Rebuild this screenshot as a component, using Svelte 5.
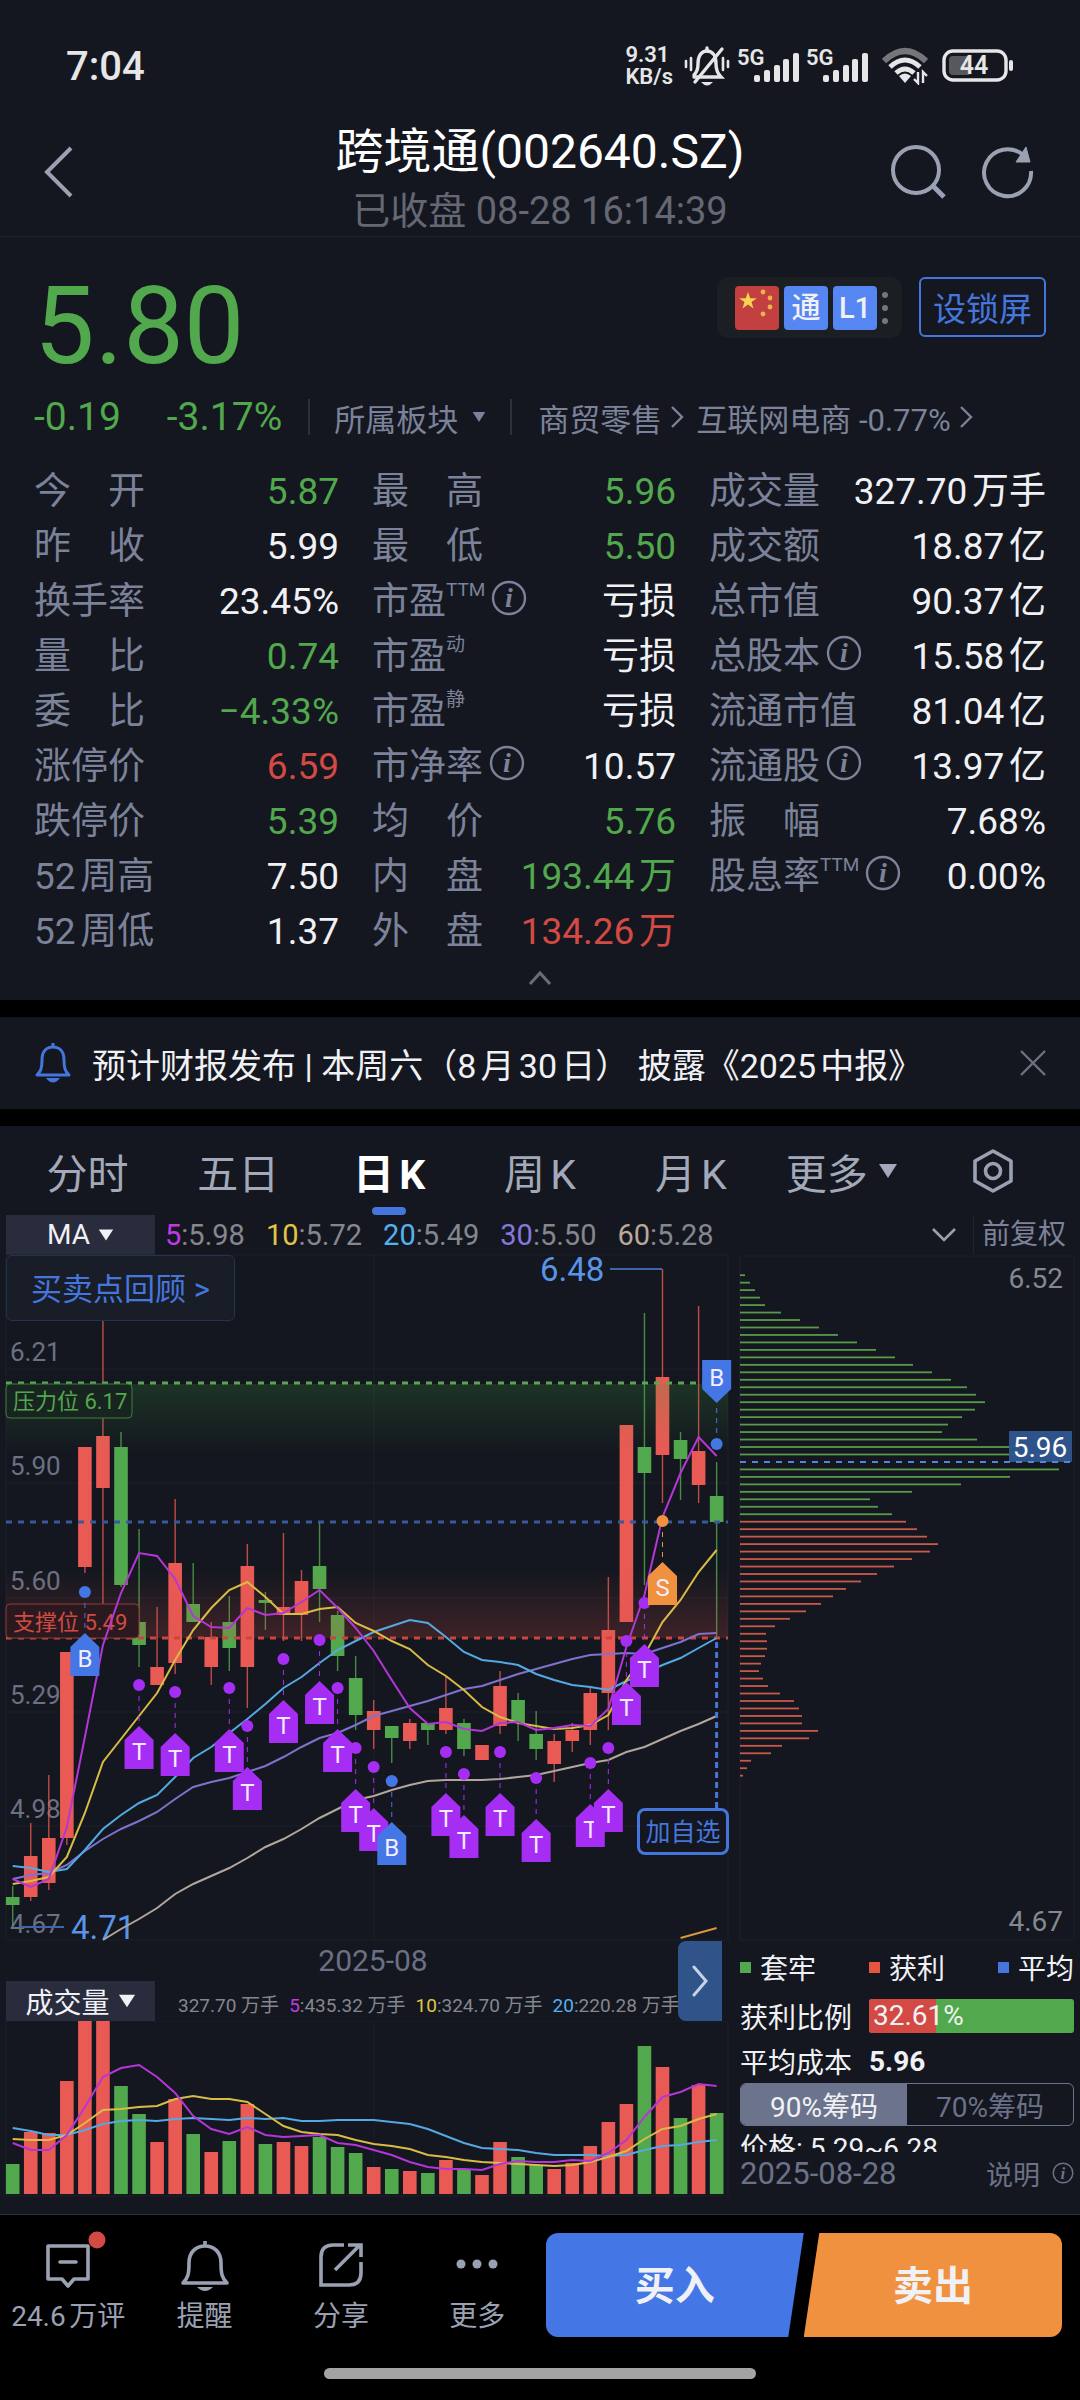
<script>
    const step = 18.05;
    const cx = (i) => 12.7 + i * step;

    const quotes = [
        [
            { label: '今　开', value: '5.87', tone: 'down' },
            { label: '昨　收', value: '5.99' },
            { label: '换手率', value: '23.45%' },
            { label: '量　比', value: '0.74', tone: 'down' },
            { label: '委　比', value: '−4.33%', tone: 'down' },
            { label: '涨停价', value: '6.59', tone: 'up' },
            { label: '跌停价', value: '5.39', tone: 'down' },
            { label: '52周高', value: '7.50' },
            { label: '52周低', value: '1.37' },
        ],
        [
            { label: '最　高', value: '5.96', tone: 'down' },
            { label: '最　低', value: '5.50', tone: 'down' },
            { label: '市盈', sup: 'TTM', info: true, value: '亏损' },
            { label: '市盈', sup: '动', value: '亏损' },
            { label: '市盈', sup: '静', value: '亏损' },
            { label: '市净率', info: true, value: '10.57' },
            { label: '均　价', value: '5.76', tone: 'down' },
            { label: '内　盘', value: '193.44万', tone: 'down' },
            { label: '外　盘', value: '134.26万', tone: 'up' },
        ],
        [
            { label: '成交量', value: '327.70万手' },
            { label: '成交额', value: '18.87亿' },
            { label: '总市值', value: '90.37亿' },
            { label: '总股本', info: true, value: '15.58亿' },
            { label: '流通市值', value: '81.04亿' },
            { label: '流通股', info: true, value: '13.97亿' },
            { label: '振　幅', value: '7.68%' },
            { label: '股息率', sup: 'TTM', info: true, value: '0.00%' },
        ],
    ];

    const tabs = ['分时', '五日', '日K', '周K', '月K'];
    let tab = '日K';

    const chipRanges = ['90%筹码', '70%筹码'];
    let chipRange = '90%筹码';

    const averages = [
        { period: '5', value: '5.98', cls: 'm5' },
        { period: '10', value: '5.72', cls: 'm10' },
        { period: '20', value: '5.49', cls: 'm20' },
        { period: '30', value: '5.50', cls: 'm30' },
        { period: '60', value: '5.28', cls: 'm60' },
    ];

    // [rising, high, body top, body bottom, low, volume]
    const candles = [
        [0, 632, 643, 651, 671, 30], [1, 569, 602, 643, 647, 62], [1, 521, 584, 629, 636, 61], [1, 398, 398, 584, 591, 113],
        [1, 193, 193, 313, 319, 173], [1, 60, 182, 234, 360, 173], [0, 178, 193, 331, 333, 108], [0, 275, 368, 391, 413, 80],
        [1, 353, 413, 431, 431, 52], [1, 245, 309, 409, 420, 95], [0, 309, 350, 368, 368, 60], [1, 368, 383, 413, 431, 42],
        [0, 342, 368, 394, 417, 53], [1, 290, 312, 413, 454, 90], [0, 338, 346, 349, 376, 50], [1, 279, 353, 361, 387, 52],
        [1, 316, 327, 361, 387, 48], [0, 268, 312, 335, 368, 57], [0, 357, 361, 402, 417, 47], [0, 402, 424, 461, 476, 41],
        [1, 446, 457, 476, 495, 27], [0, 472, 472, 484, 509, 25], [1, 465, 469, 487, 495, 23], [0, 469, 469, 476, 491, 21],
        [1, 423, 454, 476, 480, 34], [0, 465, 469, 495, 502, 25], [1, 491, 491, 506, 506, 19], [1, 417, 432, 472, 480, 52],
        [0, 439, 446, 469, 487, 37], [0, 457, 480, 495, 506, 29], [1, 480, 487, 510, 528, 25], [1, 469, 476, 487, 498, 31],
        [1, 432, 439, 476, 491, 48], [1, 323, 376, 439, 476, 72], [1, 171, 171, 368, 368, 90], [0, 59, 193, 219, 331, 148],
        [1, 15, 123, 201, 249, 127], [0, 178, 186, 205, 246, 76], [1, 52, 197, 231, 249, 109], [0, 208, 242, 268, 384, 81],
    ];

    const priceLines = [
        { cls: 'm60', from: 5, ys: [686, 675, 665, 654, 640, 630, 622, 614, 604, 593, 585, 575, 564, 555, 546, 542, 536, 531, 527, 526, 526, 526, 525, 523, 521, 517, 513, 509, 506, 498, 493, 485, 477, 470, 462] },
        { cls: 'm30', from: 0, ys: [625, 621, 619, 611, 597, 585, 575, 567, 558, 545, 533, 528, 524, 518, 512, 503, 493, 484, 479, 471, 462, 457, 452, 447, 441, 435, 432, 426, 420, 415, 410, 405, 401, 400, 399, 400, 394, 388, 380, 379] },
        { cls: 'm20', from: 0, ys: [612, 614, 618, 615, 596, 575, 561, 549, 541, 523, 504, 493, 479, 465, 450, 434, 423, 409, 396, 387, 378, 372, 366, 369, 383, 398, 406, 408, 411, 420, 426, 431, 433, 436, 427, 419, 411, 404, 394, 384] },
        { cls: 'm10', from: 0, ys: [630, 627, 623, 603, 559, 508, 485, 462, 439, 406, 376, 354, 336, 328, 343, 360, 360, 355, 353, 369, 377, 387, 395, 411, 422, 436, 453, 463, 469, 472, 475, 474, 471, 461, 426, 401, 368, 346, 318, 296] },
        { cls: 'm5', from: 0, ys: [625, 633, 625, 573, 483, 391, 339, 299, 302, 325, 362, 373, 374, 354, 361, 359, 348, 336, 354, 374, 397, 426, 454, 470, 468, 475, 477, 469, 468, 476, 474, 471, 472, 455, 393, 341, 263, 219, 183, 202] },
        { cls: 'm250', from: 37, ys: [684, 679, 674] },
    ];

    const volumeLines = [
        { cls: 'm20', from: 0, ys: [107, 110, 114, 114, 109, 103, 100, 99, 100, 98, 97, 98, 99, 97, 98, 97, 100, 100, 99, 99, 99, 101, 103, 108, 115, 122, 127, 128, 129, 132, 134, 134, 134, 135, 134, 129, 125, 124, 121, 119] },
        { cls: 'm10', from: 0, ys: [118, 119, 119, 114, 102, 89, 88, 86, 85, 78, 75, 78, 78, 81, 93, 105, 111, 113, 114, 119, 123, 125, 128, 134, 136, 139, 141, 142, 143, 144, 145, 144, 141, 136, 130, 118, 108, 105, 98, 93] },
        { cls: 'm5', from: 0, ys: [122, 129, 129, 114, 86, 56, 47, 44, 56, 72, 95, 108, 113, 106, 114, 116, 115, 114, 122, 124, 129, 134, 141, 146, 148, 148, 149, 143, 140, 141, 141, 139, 140, 132, 119, 96, 76, 71, 63, 65] },
    ];

    const points = (line) => line.ys.map((y, k) => `${cx(line.from + k)},${y}`).join(' ');

    // trade markers: candle index, dot height, letter
    const marks = [
        [4, 338, 'B'], [7, 431, 'T'], [9, 438, 'T'], [12, 434, 'T'], [13, 472, 'T'], [15, 405, 'T'], [17, 386, 'T'],
        [18, 434, 'T'], [19, 494, 'T'], [20, 513, 'T'], [21, 527, 'B'], [24, 498, 'T'], [25, 520, 'T'], [27, 498, 'T'],
        [29, 524, 'T'], [32, 509, 'T'], [33, 494, 'T'], [34, 387, 'T'], [35, 349, 'T'], [36, 267, 'S'],
    ];

    const priceAxis = [['6.21', 107], ['5.90', 221], ['5.60', 336], ['5.29', 450], ['4.98', 564], ['4.67', 679]];
    const gridRows = [115, 229, 344, 458, 572];

    const chips = [
        5, 10, 15, 20, 25, 41, 60, 79, 98, 117, 136, 155, 173, 192, 211, 227, 236, 245, 235, 222, 208, 202, 237, 272, 320, 0,
        319, 270, 221, 172, 130, 138, 152, 166, 177, 187, 198, 190, 172, 154, 137, 121, 106, 93, 81, 66, 50, 35, 26, 27, 27,
        25, 21, 19, 23, 28, 40, 54, 59, 62, 62, 78, 69, 42, 31, 11, 7, 3,
    ];

    const profitRatio = 32.61;
</script>

{#snippet info(size)}
    <svg class="info" viewBox="0 0 36 36" width={size} height={size}>
        <circle cx="18" cy="18" r="16" fill="none" stroke="currentColor" stroke-width="2.4" />
        <text x="18" y="27" text-anchor="middle">i</text>
    </svg>
{/snippet}

{#snippet caret(size)}
    <svg viewBox="0 0 20 16" width={size} height={size}><path fill="currentColor" d="M1 1h18L10 15z" /></svg>
{/snippet}

{#snippet arrow()}
    <svg viewBox="0 0 14 24" width="14" height="24"><path d="M2 2l10 10L2 22" fill="none" stroke="currentColor" stroke-width="2.4" /></svg>
{/snippet}

<div class="page">
    <div class="status">
        <span class="time">7:04</span>
        <div class="signals">
            <span class="speed"><span>9.31</span><span>KB/s</span></span>
            <svg viewBox="0 0 46 42" width="46" height="42">
                <g fill="none" stroke="#e6e6e6" stroke-width="3.4" stroke-linecap="round">
                    <path d="M10 32h27c-4-4-5-7-5-13 0-9-4-13-9-13s-9 4-9 13c0 5-1 8-4 11" />
                    <path d="M23 3v3M38 4L11 37" />
                    <path d="M7 13v12M2 16v6M39 13v12M44 16v6" stroke-width="2.6" />
                </g>
                <path d="M17 37h12q-6 7-12 0z" fill="#e6e6e6" />
            </svg>
            {#each [0, 1] as sim}
                <svg class="sim" viewBox="0 0 62 38" width="62" height="38">
                    <text class="net" x="0" y="18">5G</text>
                    <g fill="#e6e6e6">
                        <rect x="17" y="28" width="6" height="7" rx="2" />
                        <rect x="27" y="23" width="6" height="12" rx="2" />
                        <rect x="37" y="18" width="6" height="17" rx="2" />
                        <rect x="46" y="12" width="6" height="23" rx="2" />
                        <rect x="56" y="6" width="6" height="29" rx="2" />
                    </g>
                </svg>
            {/each}
            <svg class="wifi" viewBox="0 0 46 38" width="46" height="38" fill="none">
                <path d="M2 14q21-20 42 0" stroke="#747679" stroke-width="6" />
                <path d="M8 20q15-14 30 0M14 26q9-8 18 0" stroke="#e6e6e6" stroke-width="5" />
                <path d="M17 29q6-5 12 0l-6 7z" fill="#e6e6e6" />
                <path d="M36 25v11l-4-4M41 36V25l4 4" stroke="#e6e6e6" stroke-width="2.4" />
            </svg>
            <svg viewBox="0 0 72 34" width="72" height="34">
                <rect x="2" y="2" width="62" height="29" rx="9" fill="none" stroke="#e6e6e6" stroke-width="3.4" />
                <rect x="7" y="7" width="22" height="19" rx="4" fill="#56585d" />
                <rect x="67" y="11" width="4" height="11" rx="2" fill="#e6e6e6" />
                <text class="charge" x="32" y="25" text-anchor="middle">44</text>
            </svg>
        </div>
    </div>

    <header>
        <button class="plain" aria-label="返回">
            <svg viewBox="0 0 30 52" width="30" height="52"><path d="M27 2L3 26l24 24" fill="none" stroke="#9aa1b3" stroke-width="4" /></svg>
        </button>
        <div class="title">
            <h1>跨境通(002640.SZ)</h1>
            <p>已收盘 08-28 16:14:39</p>
        </div>
        <div class="tools">
            <button class="plain" aria-label="搜索">
                <svg viewBox="0 0 56 56" width="56" height="56" fill="none" stroke="#9aa1b3" stroke-width="4">
                    <circle cx="26" cy="26" r="23" />
                    <path d="M43 42l11 11" stroke-width="5" />
                </svg>
            </button>
            <button class="plain" aria-label="刷新">
                <svg viewBox="0 0 56 56" width="56" height="56" fill="none" stroke="#9aa1b3" stroke-width="4">
                    <path d="M43 11A23.500 23.500 0 1 0 51 27" />
                    <path d="M46 3l4 15H36z" fill="#9aa1b3" stroke-width="1" />
                </svg>
            </button>
        </div>
    </header>

    <section class="quote">
        <div class="top">
            <strong class="price">5.80</strong>
            <div class="badges">
                <svg viewBox="0 0 44 44" width="44" height="44">
                    <rect width="44" height="44" rx="4" fill="#c2403f" />
                    <path fill="#f6d352" d="M13 6l2.200 6.200h6.600l-5.300 3.900 2 6.300-5.500-3.800-5.500 3.800 2-6.300-5.300-3.900h6.600z" />
                    <g fill="#f0b04a">
                        <circle cx="28" cy="6" r="2.400" />
                        <circle cx="35" cy="12" r="2.400" />
                        <circle cx="35" cy="21" r="2.400" />
                        <circle cx="28" cy="28" r="2.400" />
                    </g>
                </svg>
                <span class="badge">通</span>
                <span class="badge">L1</span>
                <svg viewBox="0 0 6 32" width="6" height="32" fill="#75777c">
                    <circle cx="3" cy="3" r="3" /><circle cx="3" cy="16" r="3" /><circle cx="3" cy="29" r="3" />
                </svg>
            </div>
            <button class="lock">设锁屏</button>
        </div>

        <div class="change">
            <span class="down diff">-0.19</span>
            <span class="down diff">-3.17%</span>
            <button class="plain sector">所属板块 {@render caret(14)}</button>
            <a href="#retail">商贸零售{@render arrow()}</a>
            <a href="#ecommerce">互联网电商 -0.77%{@render arrow()}</a>
        </div>

        <div class="stats">
            {#each quotes as column}
                <dl>
                    {#each column as q}
                        <div>
                            <dt>{q.label}{#if q.sup}<sup>{q.sup}</sup>{/if}{#if q.info}{@render info(36)}{/if}</dt>
                            <dd class={q.tone ?? ''}>{q.value}</dd>
                        </div>
                    {/each}
                </dl>
            {/each}
        </div>
        <button class="plain fold" aria-label="收起">
            <svg viewBox="0 0 24 16" width="24" height="16"><path d="M2 14L12 3l10 11" fill="none" stroke="#686d7b" stroke-width="3" /></svg>
        </button>
    </section>

    <section class="notice">
        <svg viewBox="0 0 38 42" width="38" height="42">
            <path d="M3 33h32c-4-4-5-7-5-15 0-9-5-13-11-13S8 9 8 18c0 8-1 11-5 15zM19 1v4" fill="none" stroke="#4576dd" stroke-width="3" stroke-linejoin="round" />
            <path d="M12 36h14q-7 9-14 0z" fill="#4576dd" />
        </svg>
        <p>预计财报发布 | 本周六（8月30日） 披露《2025中报》</p>
        <button class="plain" aria-label="关闭">
            <svg viewBox="0 0 26 26" width="26" height="26"><path d="M1 1l24 24M25 1L1 25" stroke="#6d7282" stroke-width="2.400" /></svg>
        </button>
    </section>

    <section class="chart">
        <nav>
            {#each tabs as name}
                <button class="plain tab" class:active={tab === name} on:click={() => (tab = name)}>{name}</button>
            {/each}
            <button class="plain tab">更多{@render caret(20)}</button>
            <button class="plain tab" aria-label="设置">
                <svg viewBox="0 0 42 44" width="42" height="44" fill="none" stroke="#9aa1b3" stroke-width="3.600" stroke-linejoin="round">
                    <path d="M21 2l18 10v20L21 42 3 32V12z" />
                    <circle cx="21" cy="22" r="7.500" />
                </svg>
            </button>
        </nav>

        <div class="ma">
            <button class="picker">MA {@render caret(16)}</button>
            <p>
                {#each averages as a}
                    <span><b class={a.cls}>{a.period}</b>:{a.value}</span>
                {/each}
            </p>
            <button class="plain" aria-label="展开均线">
                <svg viewBox="0 0 26 16" width="26" height="16"><path d="M2 2l11 11L24 2" fill="none" stroke="#9aa1b3" stroke-width="2.600" /></svg>
            </button>
            <button class="plain adjust">前复权</button>
        </div>

        <div class="panes">
            <div class="left">
                <div class="kline">
                    <svg class="plot" viewBox="0 0 732 687">
                        <defs>
                            <linearGradient id="press" x1="0" y1="0" x2="0" y2="1">
                                <stop offset="0" stop-color="#3a9a3a" stop-opacity="0.22" />
                                <stop offset="1" stop-color="#3a9a3a" stop-opacity="0" />
                            </linearGradient>
                            <linearGradient id="hold" x1="0" y1="1" x2="0" y2="0">
                                <stop offset="0" stop-color="#d24a43" stop-opacity="0.22" />
                                <stop offset="1" stop-color="#d24a43" stop-opacity="0" />
                            </linearGradient>
                        </defs>
                        <rect class="frame" x="6" y="1" width="722" height="685" />
                        {#each gridRows as y}
                            <path class="frame" d="M6 {y}H728" />
                        {/each}
                        <path class="frame" d="M374 1V686" />

                        {#each priceAxis as [label, y]}
                            <text class="axis" x="10" y={y}>{label}</text>
                        {/each}

                        {#each candles as [rising, high, top, bottom, low], i}
                            <g class={rising ? 'red' : 'green'}>
                                <rect x={cx(i) - 0.7} y={high} width="1.4" height={low - high} opacity="0.8" />
                                <rect x={cx(i) - 6.8} y={top} width="13.6" height={bottom - top} />
                            </g>
                        {/each}

                        <rect x="6" y="130" width="722" height="68" fill="url(#press)" />
                        <rect x="6" y="316" width="722" height="68" fill="url(#hold)" />
                        <path class="dash press" d="M6 129H728" />
                        <path class="dash last" d="M6 268H728" />
                        <path class="dash hold" d="M6 384H728" />

                        <rect class="tag press" x="6" y="130" width="126" height="34" rx="4" />
                        <text class="tagtext press" x="13" y="155">压力位 6.17</text>
                        <rect class="tag hold" x="6" y="350" width="133" height="34" rx="4" />
                        <text class="tagtext hold" x="13" y="376">支撑位 5.49</text>

                        <path d="M20 673H64M610 15H662" stroke="#3c66a8" stroke-width="2" />
                        <text class="extreme" x="540" y="27">6.48</text>
                        <text class="extreme" x="71" y="685">4.71</text>

                        {#each priceLines as line}
                            <polyline class="line {line.cls}" points={points(line)} />
                        {/each}

                        {#each marks as [i, y, kind]}
                            <g class="mark {kind}" transform="translate({cx(i)} {y})">
                                <path class="stem" d="M0 11V40" />
                                <circle r="6" />
                                <path d="M0 41L14.500 55V84H-14.500V55z" />
                                <text y="75" text-anchor="middle">{kind}</text>
                            </g>
                        {/each}
                        <g class="mark B" transform="translate({cx(39)} 190)">
                            <path class="stem" d="M0 -36V-10" />
                            <circle r="6" />
                            <path d="M0 -41L14.500 -55V-84H-14.500V-55z" />
                            <text y="-58" text-anchor="middle">B</text>
                        </g>
                        <path d="M716.600 388V554" stroke="#4576dd" stroke-width="3" stroke-dasharray="6 4" />
                    </svg>
                    <button class="review">买卖点回顾 &gt;</button>
                    <button class="watch">加自选</button>
                </div>

                <div class="below">
                    <div class="month">2025-08</div>
                    <div class="volhead">
                        <button class="picker">成交量 {@render caret(18)}</button>
                        <p>
                            <span>327.70 万手</span>
                            <span><b class="m5">5</b>:435.32 万手</span>
                            <span><b class="m10">10</b>:324.70 万手</span>
                            <span><b class="m20">20</b>:220.28 万手</span>
                        </p>
                    </div>
                    <button class="expand" aria-label="展开">
                        <svg viewBox="0 0 18 32" width="18" height="32"><path d="M3 2l12 14L3 30" fill="none" stroke="#c6d2e6" stroke-width="3" stroke-linecap="round" /></svg>
                    </button>
                </div>

                <svg class="plot" viewBox="0 0 732 176">
                    <rect class="frame" x="6" y="0" width="722" height="175" />
                    <path class="frame" d="M374 0V175" />
                    {#each candles as candle, i}
                        <rect class={candle[0] ? 'red' : 'green'} x={cx(i) - 6.8} y={173 - candle[5]} width="13.6" height={candle[5]} />
                    {/each}
                    {#each volumeLines as line}
                        <polyline class="line {line.cls}" points={points(line)} />
                    {/each}
                </svg>
            </div>

            <div class="right">
                <svg class="plot" viewBox="0 0 348 687">
                    <rect class="frame" x="8" y="2" width="334" height="684" />
                    {#each chips as w, i}
                        <rect class={i < 33 ? 'chipgreen' : 'chipred'} x="8" y={20.300 + i * 7.470} width={w} height="1.8" />
                    {/each}
                    <text class="scale" x="331" y="34" text-anchor="end">6.52</text>
                    <text class="scale" x="331" y="677" text-anchor="end">4.67</text>
                    <rect x="277" y="177" width="63" height="31" fill="#2f5590" fill-opacity="0.95" />
                    <path d="M8 208H340" stroke="#5585d6" stroke-width="2" stroke-dasharray="6 6" />
                    <text class="avg" x="308" y="203" text-anchor="middle">5.96</text>
                </svg>

                <div class="chipinfo">
                    <ul>
                        <li class="trapped">套牢</li>
                        <li class="gain">获利</li>
                        <li class="mean">平均</li>
                    </ul>
                    <div class="row">
                        <span>获利比例</span>
                        <div class="ratio"><i style="width: {profitRatio}%"></i><span>{profitRatio}%</span></div>
                    </div>
                    <div class="row cost"><span>平均成本</span><strong>5.96</strong></div>
                    <div class="segments">
                        {#each chipRanges as name}
                            <button class:on={chipRange === name} on:click={() => (chipRange = name)}>{name}</button>
                        {/each}
                    </div>
                    <div class="range">价格: 5.29~6.28</div>
                    <div class="date"><span>2025-08-28</span><a href="#help">说明 {@render info(22)}</a></div>
                </div>
            </div>
        </div>
    </section>

    <footer>
        <div class="actions">
            <button class="plain">
                <svg viewBox="0 0 60 60" width="60" height="60" fill="none" stroke="#9aa1b3" stroke-width="3.600" stroke-linejoin="round">
                    <path d="M10 13h40v33H36l-6 7-6-7H10z" />
                    <path d="M22 29h16" stroke-linecap="round" />
                    <circle cx="59" cy="7" r="8.500" fill="#d24a43" stroke="none" />
                </svg>
                24.6万评
            </button>
            <button class="plain">
                <svg viewBox="0 0 60 60" width="60" height="60" fill="none" stroke="#9aa1b3" stroke-width="3.600" stroke-linejoin="round">
                    <path d="M8 50h44c-5-5-6-9-6-20 0-11-7-17-16-17s-16 6-16 17c0 11-1 15-6 20zM30 8v5" />
                    <path d="M22 54h16q-8 8-16 0z" fill="#9aa1b3" stroke="none" />
                </svg>
                提醒
            </button>
            <button class="plain">
                <svg viewBox="0 0 60 60" width="60" height="60" fill="none" stroke="#9aa1b3" stroke-width="3.600">
                    <path d="M33 12H22q-12 0-12 12v28h28q12 0 12-12V29M24 37l25-25M37 12h13v12" />
                </svg>
                分享
            </button>
            <button class="plain">
                <svg viewBox="0 0 60 60" width="60" height="60" fill="#9aa1b3">
                    <circle cx="14" cy="31" r="4.500" /><circle cx="30" cy="31" r="4.500" /><circle cx="46" cy="31" r="4.500" />
                </svg>
                更多
            </button>
        </div>
        <button class="trade buy">买入</button>
        <button class="trade sell">卖出</button>
    </footer>
    <div class="home"></div>
</div>

<style>
    :global(body) {
        background: #000;
    }

    .page {
        font-family: Roboto, "Noto Sans CJK SC", sans-serif;
        text-autospace: normal;
        color: #f0f1f5;
        background: #000;
    }

    h1, p, ul, dl, dd {
        margin: 0;
        padding: 0;
        font-weight: 400;
    }

    button {
        font-family: inherit;
        cursor: pointer;
    }

    a {
        color: inherit;
        text-decoration: none;
    }

    svg { display: block; }

    .plain {
        background: none;
        border: none;
        padding: 0;
        color: inherit;
    }

    .down { color: #52a84c; }
    .up { color: #d24a43; }

    .status {
        height: 128px;
        padding: 4px 66px 0;
        box-sizing: border-box;
        display: flex;
        align-items: center;
        justify-content: space-between;
        background: #14171f;
        color: #e6e6e6;
    }

    .time {
        font-size: 40px;
        font-weight: 500;
    }

    .signals {
        display: flex;
        align-items: center;
        gap: 7px;
    }

    .sim { overflow: visible; }
    .wifi { margin: 0 7px; }

    .speed {
        display: flex;
        flex-direction: column;
        margin-right: 4px;
        font-size: 22px;
        line-height: 22px;
        font-weight: 600;
    }

    .net { font-size: 22px; font-weight: 600; fill: #e6e6e6; }
    .charge { font-size: 25px; font-weight: 600; fill: #e6e6e6; }

    header {
        height: 108px;
        padding: 0 44px;
        display: grid;
        grid-template-columns: 1fr auto 1fr;
        align-items: start;
        background: #14171f;
        border-bottom: 1px solid #20242d;
    }

    header button { height: 88px; }

    .title { text-align: center; }

    h1 {
        font-size: 48px;
        line-height: 48px;
        color: #fff;
    }

    .title p {
        margin-top: 16px;
        font-size: 38px;
        line-height: 38px;
        color: #646874;
    }

    .tools {
        display: flex;
        justify-content: flex-end;
        gap: 34px;
    }

    .quote {
        padding: 40px 34px 0;
        background: #14171f;
    }

    .top {
        display: flex;
        align-items: flex-start;
        gap: 17px;
    }

    .price {
        flex: 1;
        font-size: 108px;
        line-height: 98px;
        font-weight: 400;
        color: #52a84c;
    }

    .badges {
        height: 61px;
        padding: 0 14px 0 18px;
        display: flex;
        align-items: center;
        gap: 5px;
        border-radius: 12px;
        background: #1b1e22;
    }

    .badge {
        width: 44px;
        line-height: 44px;
        border-radius: 4px;
        background: #5586f2;
        font-size: 29px;
        font-weight: 500;
        text-align: center;
    }

    .lock {
        height: 60px;
        padding: 0 12px;
        border: 2px solid #4576dd;
        border-radius: 6px;
        background: none;
        color: #4576dd;
        font-size: 33px;
    }

    .change {
        height: 84px;
        margin-bottom: 2px;
        display: flex;
        align-items: center;
        gap: 12px;
        font-size: 31px;
        color: #7b8299;
        white-space: nowrap;
    }

    .change a {
        display: flex;
        align-items: center;
        gap: 8px;
    }

    .diff { font-size: 39px; }
    .diff + .diff { margin-left: 34px; }

    .sector {
        display: flex;
        align-items: center;
        gap: 14px;
        height: 36px;
        margin: 0 14px;
        padding: 0 24px;
        border-left: 2px solid #2b303b;
        border-right: 2px solid #2b303b;
        font-size: 31px;
    }

    .stats {
        display: grid;
        grid-template-columns: 305fr 304fr 337fr;
        gap: 33px;
        font-size: 37px;
    }

    .stats dl > div {
        height: 55px;
        display: flex;
        align-items: baseline;
        justify-content: space-between;
        white-space: nowrap;
    }

    dt {
        display: flex;
        align-items: center;
        color: #7b8299;
    }

    sup {
        align-self: flex-start;
        font-size: 19px;
        line-height: 38px;
    }

    dt .info { margin-left: 6px; }

    .info text {
        font: italic bold 28px "Liberation Serif", serif;
        fill: currentColor;
    }

    .fold {
        display: flex;
        width: 100%;
        height: 44px;
        align-items: center;
        justify-content: center;
    }

    .notice {
        height: 92px;
        margin: 17px 0;
        padding: 0 34px;
        display: flex;
        align-items: center;
        gap: 20px;
        background: #14171f;
    }

    .notice p {
        flex: 1;
        font-size: 34px;
        color: #f0f1f5;
    }

    .chart {
        background: #14171f;
        padding-bottom: 17px;
        border-bottom: 1px solid #2d323b;
    }

    nav {
        height: 89px;
        padding: 0 12px;
        display: grid;
        grid-template-columns: repeat(7, 1fr);
    }

    .tab {
        position: relative;
        display: flex;
        align-items: center;
        justify-content: center;
        gap: 10px;
        font-size: 41px;
        color: #a3a9ba;
    }

    .tab.active {
        color: #fff;
        font-weight: 700;
    }

    .tab.active::after {
        content: "";
        position: absolute;
        bottom: 0;
        width: 34px;
        height: 8px;
        border-radius: 4px;
        background: #4576dd;
    }

    .ma {
        height: 39px;
        padding-left: 6px;
        display: flex;
        align-items: center;
        color: #84878e;
    }

    .ma p {
        flex: 1;
        display: flex;
        gap: 21px;
        padding-left: 10px;
        font-size: 29px;
    }

    b { font-weight: 400; }

    .picker {
        width: 149px;
        height: 40px;
        padding: 0;
        display: flex;
        align-items: center;
        justify-content: center;
        gap: 8px;
        border: none;
        background: #282c3d;
        color: #f0f1f5;
        font-size: 28px;
    }

    .adjust {
        margin-left: 16px;
        padding: 0 14px 0 8px;
        border-left: 1px solid #20242d;
        font-size: 28px;
        line-height: 38px;
        color: #7b8299;
    }

    .panes {
        display: grid;
        grid-template-columns: 732fr 348fr;
    }

    .plot {
        width: 100%;
        height: auto;
    }

    .frame {
        fill: none;
        stroke: #1c2028;
        stroke-width: 1;
    }

    .red { fill: #ea5a54; }
    .green { fill: #52a94d; }
    .chipred { fill: #c9594a; }
    .chipgreen { fill: #599a48; }

    .axis { font-size: 26px; fill: #6b7084; }
    .scale { font-size: 28px; fill: #85888f; }
    .avg { font-size: 28px; fill: #fff; }
    .extreme { font-size: 33px; fill: #5a94e6; }

    .line { fill: none; stroke-width: 2; }
    .line.m5 { stroke: #b436d6; }
    .line.m10 { stroke: #d9bc45; }
    .line.m20 { stroke: #55a9e2; }
    .line.m30 { stroke: #7f72cf; }
    .line.m60 { stroke: #b3a69c; }
    .line.m250 { stroke: #d9953f; }

    b.m5 { color: #c23ae6; }
    b.m10 { color: #e2c545; }
    b.m20 { color: #55b0ef; }
    b.m30 { color: #8478de; }
    b.m60 { color: #b9a898; }

    .dash {
        fill: none;
        stroke-width: 3;
        stroke-dasharray: 6 6;
    }
    .dash.press { stroke: #59a653; }
    .dash.last { stroke: #38599c; }
    .dash.hold { stroke: #c8463f; }

    .tag { stroke-width: 1; }
    .tag.press { fill: #17241f; stroke: #3f7d42; }
    .tag.hold { fill: #2a1a20; stroke: #8f3a39; }
    .tagtext { font-size: 22px; }
    .tagtext.press { fill: #52a84c; }
    .tagtext.hold { fill: #d24a43; }

    .mark { fill: #a62ef4; stroke: #a62ef4; }
    .mark.B { fill: #4576e6; stroke: #4576e6; }
    .mark.S { fill: #f0913f; stroke: #f0913f; }
    .mark circle, .mark path { stroke-width: 0; }
    .mark .stem {
        stroke-width: 1;
        stroke-dasharray: 5 5;
    }
    .mark text {
        font-size: 24px;
        fill: #f4ecff;
        stroke: none;
    }

    .kline, .below { position: relative; }

    .review {
        position: absolute;
        left: 6px;
        top: 1px;
        width: 229px;
        height: 66px;
        padding: 0 0 4px;
        border: 1px solid #233352;
        border-radius: 6px;
        background: #191d27;
        color: #4576dd;
        font-size: 31px;
    }

    .watch {
        position: absolute;
        right: 3px;
        bottom: 86px;
        width: 92px;
        height: 47px;
        padding: 0 0 4px;
        border: 3px solid #4576dd;
        border-radius: 8px;
        background: #14171f;
        color: #4576dd;
        font-size: 25px;
    }

    .month {
        height: 40px;
        padding-left: 14px;
        font-size: 30px;
        line-height: 40px;
        text-align: center;
        color: #6b7084;
    }

    .volhead {
        height: 40px;
        padding-left: 6px;
        display: flex;
        align-items: center;
    }

    .volhead p {
        padding: 5px 0 0 23px;
        display: flex;
        gap: 10px;
        font-size: 19px;
        color: #84878e;
        white-space: nowrap;
    }

    .expand {
        position: absolute;
        right: 10px;
        top: 0;
        width: 44px;
        height: 80px;
        padding: 0;
        display: flex;
        align-items: center;
        justify-content: center;
        border: none;
        border-radius: 8px 0 0 8px;
        background: #305389;
    }

    .chipinfo {
        padding: 0 6px 0 8px;
        font-size: 28px;
    }

    ul {
        height: 52px;
        display: flex;
        align-items: center;
        justify-content: space-between;
        list-style: none;
    }

    li {
        display: flex;
        align-items: center;
        gap: 9px;
    }

    li::before {
        content: "";
        width: 11px;
        height: 11px;
    }
    .trapped::before { background: #52a94d; }
    .gain::before { background: #e65540; }
    .mean::before { background: #4576dd; }

    .row {
        height: 46px;
        display: grid;
        grid-template-columns: 129px 1fr;
        align-items: center;
        white-space: nowrap;
    }

    .cost { height: 44px; }

    .ratio {
        position: relative;
        height: 34px;
        display: flex;
        border-radius: 3px;
        overflow: hidden;
        background: #52a94d;
        line-height: 34px;
    }

    .ratio i {
        background: #d24a43;
    }

    .ratio span {
        position: absolute;
        left: 4px;
    }

    .segments {
        height: 43px;
        display: flex;
        border: 1px solid #6b748c;
        border-radius: 6px;
        box-sizing: border-box;
        overflow: hidden;
    }

    .segments button {
        flex: 1;
        padding: 0;
        border: none;
        background: none;
        color: #6b7288;
        font-size: 28px;
    }

    .segments .on {
        background: #6b748c;
        color: #f0f1f5;
    }

    .range {
        height: 26px;
        line-height: 46px;
        overflow: hidden;
    }

    .date {
        height: 42px;
        display: flex;
        align-items: center;
        justify-content: space-between;
        font-size: 31px;
        color: #6b7288;
    }

    .date a {
        display: flex;
        align-items: center;
        gap: 12px;
        font-size: 27px;
    }

    footer {
        padding: 18px 18px 0 0;
        display: flex;
        background: #000;
    }

    .actions {
        flex: 545;
        display: grid;
        grid-template-columns: repeat(4, 1fr);
        color: #9aa1b3;
    }

    .actions button {
        display: flex;
        flex-direction: column;
        align-items: center;
        gap: 4px;
        font-size: 28px;
        line-height: 40px;
        white-space: nowrap;
    }

    .actions svg { overflow: visible; }

    .trade {
        flex: 258;
        height: 104px;
        padding: 0 0 4px;
        border: none;
        color: #f0f1f5;
        font-size: 40px;
        font-weight: 700;
    }

    .buy {
        background: #4576e6;
        border-radius: 12px 0 0 12px;
        clip-path: polygon(0 0, 100% 0, 94% 100%, 0 100%);
    }

    .sell {
        background: #f0913f;
        border-radius: 0 12px 12px 0;
        clip-path: polygon(6% 0, 100% 0, 100% 100%, 0 100%);
    }

    .home {
        width: 40%;
        height: 11px;
        margin: 31px auto 21px;
        border-radius: 6px;
        background: #a4a4a4;
    }
</style>
